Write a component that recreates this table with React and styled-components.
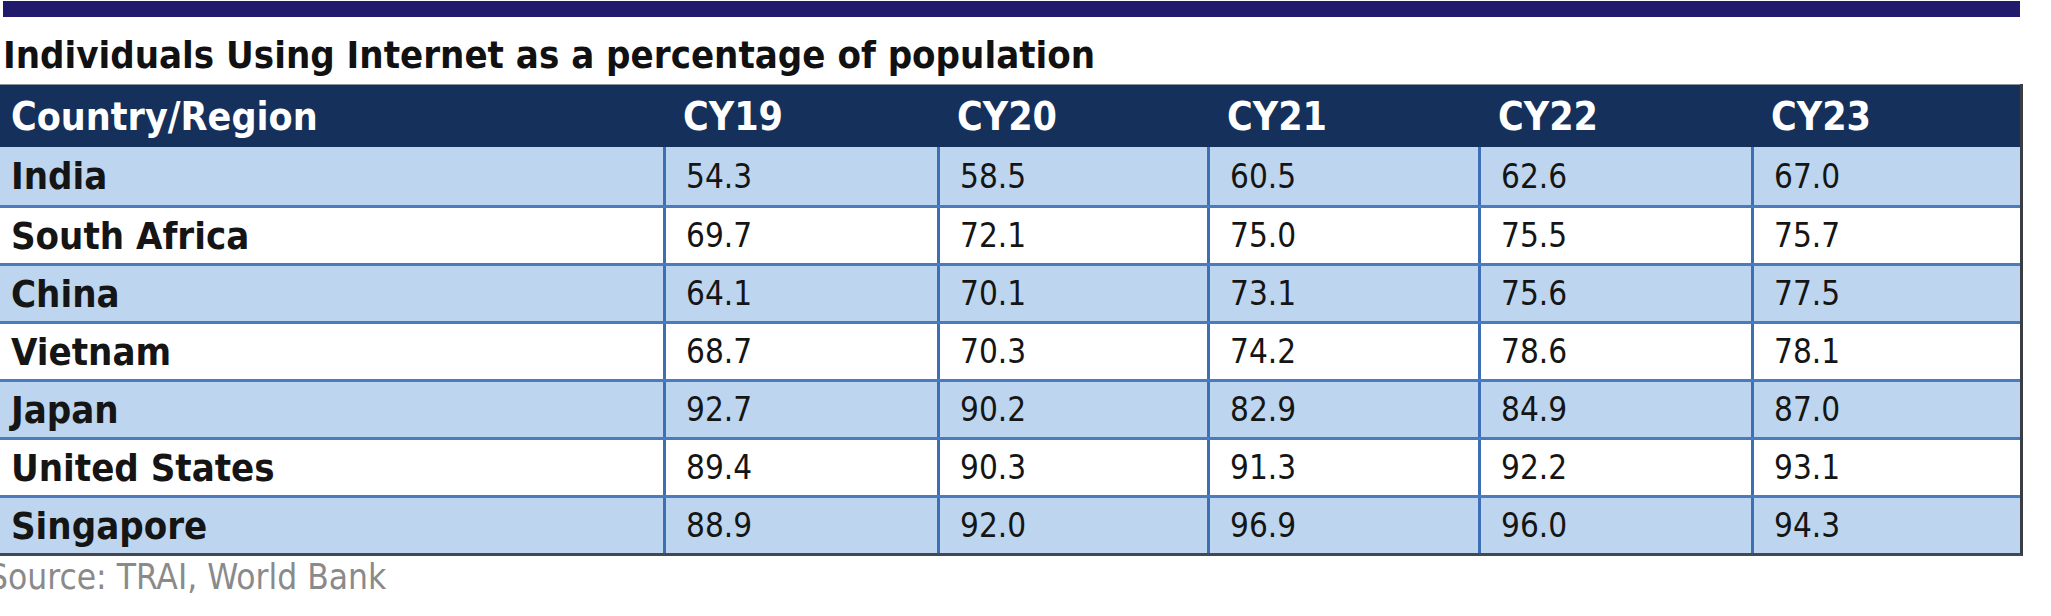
import React from "react";
import styled, { createGlobalStyle } from "styled-components";

const Global = createGlobalStyle`
  html, body { margin: 0; padding: 0; background: #ffffff; }
  body { font-family: "DejaVu Sans Condensed", "DejaVu Sans", sans-serif; overflow: hidden; }
`;

const Page = styled.div`
  width: 2051px;
  height: 616px;
  padding-top: 1px;
  box-sizing: border-box;
  overflow: hidden;
`;

const Bar = styled.div`
  margin-left: 3px;
  width: 2017px;
  height: 16px;
  background: #221b6c;
`;

const Title = styled.h1`
  margin: 16px 0 0 3px;
  font-size: 38px;
  line-height: 44px;
  font-weight: 700;
  color: #111111;
  white-space: nowrap;
`;

const Table = styled.div`
  margin-top: 7px;
  width: 2023px;
  border-right: 3px solid #3a3d44;
  border-bottom: 3px solid #45484e;
  box-sizing: border-box;
`;

const cols = "663px 274px 270px 271px 273px 1fr";

const Row = styled.div`
  display: grid;
  grid-template-columns: ${cols};
  height: ${(p) => (p.$header ? "63px" : "58px")};
  box-sizing: border-box;
  background: ${(p) => (p.$header ? "#15305a" : p.$alt ? "#ffffff" : "#bdd5ee")};
  border-top: ${(p) =>
    p.$header ? "1px solid #8a929c" : p.$first ? "none" : "3px solid #4a7bbd"};
  color: ${(p) => (p.$header ? "#ffffff" : "#151515")};
`;

const Cell = styled.div`
  display: flex;
  align-items: center;
  padding-left: ${(p) => (p.$lead ? "11px" : "20px")};
  font-size: ${(p) => p.$size}px;
  font-weight: ${(p) => (p.$bold ? 700 : 400)};
  white-space: nowrap;
  border-left: ${(p) => (p.$line ? "3px solid #3d6fb6" : "none")};
  box-sizing: border-box;
`;

const Source = styled.div`
  margin: 1px 0 0 -12px;
  font-size: 35px;
  line-height: 40px;
  color: #8a8a8a;
  white-space: nowrap;
`;

const years = ["CY19", "CY20", "CY21", "CY22", "CY23"];
const data = [
  ["India", "54.3", "58.5", "60.5", "62.6", "67.0"],
  ["South Africa", "69.7", "72.1", "75.0", "75.5", "75.7"],
  ["China", "64.1", "70.1", "73.1", "75.6", "77.5"],
  ["Vietnam", "68.7", "70.3", "74.2", "78.6", "78.1"],
  ["Japan", "92.7", "90.2", "82.9", "84.9", "87.0"],
  ["United States", "89.4", "90.3", "91.3", "92.2", "93.1"],
  ["Singapore", "88.9", "92.0", "96.9", "96.0", "94.3"],
];

export default function App() {
  return (
    <Page>
      <Global />
      <Bar />
      <Title>Individuals Using Internet as a percentage of population</Title>
      <Table>
        <Row $header>
          <Cell $lead $bold $size={39}>Country/Region</Cell>
          {years.map((y) => (
            <Cell key={y} $bold $size={39}>{y}</Cell>
          ))}
        </Row>
        {data.map((r, i) => (
          <Row key={r[0]} $alt={i % 2 === 1} $first={i === 0}>
            <Cell $lead $bold $size={38}>{r[0]}</Cell>
            {r.slice(1).map((v, j) => (
              <Cell key={j} $line $size={33}>{v}</Cell>
            ))}
          </Row>
        ))}
      </Table>
      <Source>Source: TRAI, World Bank</Source>
    </Page>
  );
}
